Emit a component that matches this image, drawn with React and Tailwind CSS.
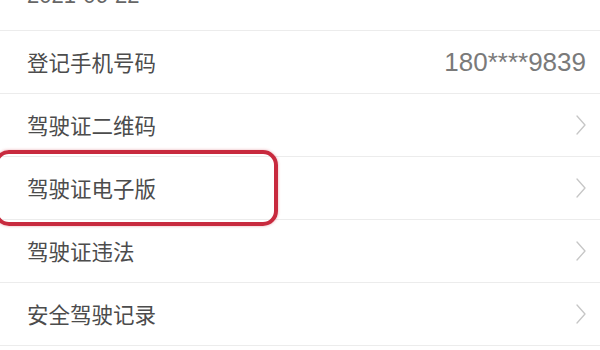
const rows = [
  { label: "登记手机号码", value: "180****9839" },
  { label: "驾驶证二维码", arrow: true },
  { label: "驾驶证电子版", arrow: true, marked: true },
  { label: "驾驶证违法", arrow: true },
  { label: "安全驾驶记录", arrow: true },
];

function Chevron() {
  return (
    <svg width="12" height="22" viewBox="0 0 12 22" className="mr-[1px]">
      <polyline points="2,2 10,11 2,20" fill="none" stroke="#c6c6c6" strokeWidth="1.3" strokeLinecap="round" strokeLinejoin="round" />
    </svg>
  );
}

export default function App() {
  return (
    <div
      className="w-[600px] h-[350px] overflow-hidden bg-white"
      style={{ fontFamily: '"Noto Sans CJK SC", "Noto Sans", sans-serif' }}
    >
      <div className="h-[31px] border-b border-[#ececec] overflow-hidden">
        <div
          className="-mt-[17px] pl-[27px] text-[22px] leading-[26px] text-[#666]"
          style={{ fontFamily: '"Liberation Sans", sans-serif' }}
        >
          2021-06-22
        </div>
      </div>
      {rows.map((r) => (
        <div
          key={r.label}
          className="relative h-[63px] flex items-center justify-between pl-[27px] pr-[12px] border-b border-[#ececec]"
        >
          <span className="text-[21.5px] text-[#4c4c4c]">{r.label}</span>
          {r.value && (
            <span
              className="text-[26px] text-[#7a7a7a] mr-[2px]"
              style={{ fontFamily: '"Liberation Sans", sans-serif' }}
            >
              {r.value}
            </span>
          )}
          {r.arrow && <Chevron />}
          {r.marked && (
            <div className="absolute -left-[6px] -top-[7px] w-[284px] h-[76px] rounded-[15px] border-[4px] border-[#c82a3e] shadow-[0_0_3px_rgba(200,42,62,0.4)]" />
          )}
        </div>
      ))}
    </div>
  );
}
